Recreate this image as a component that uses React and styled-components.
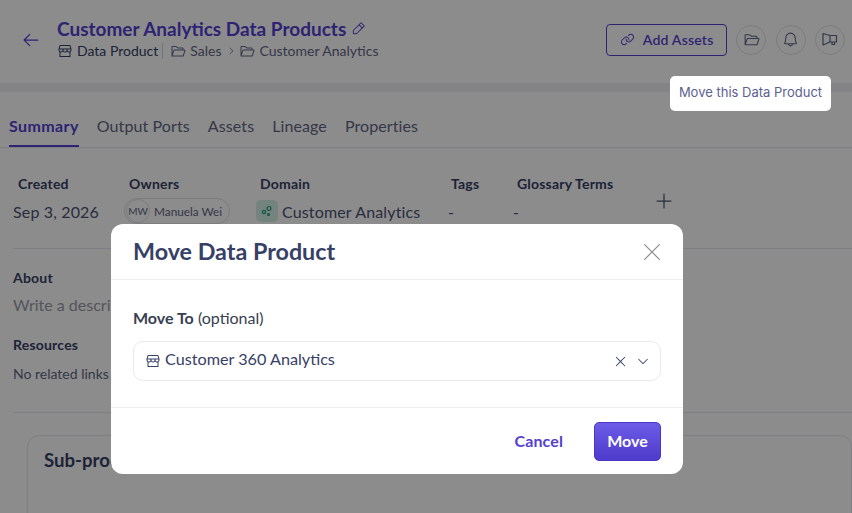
import React from "react";
import styled, { createGlobalStyle } from "styled-components";
import {
  PiArrowLeft,
  PiBell,
  PiCaretDown,
  PiCaretRight,
  PiFolderOpen,
  PiLink,
  PiPencilSimple,
  PiPlus,
  PiStorefront,
  PiX,
  PiXLight,
} from "react-icons/pi";

const GlobalStyle = createGlobalStyle`
  html, body {
    margin: 0;
    width: 852px;
    height: 513px;
    overflow: hidden;
    background: #fff;
    font-family: "Lato", "Noto Sans", sans-serif;
    color: #374066;
  }
  * { box-sizing: border-box; }
`;

const MoveIcon = () => (
  <svg width="18" height="18" viewBox="0 0 18 18" fill="none" stroke="currentColor" strokeWidth="1.2">
    <path d="M2 2.5l7 2h6.5V11H9l-7 3z" strokeLinejoin="round" />
    <path d="M9 4.5V11" />
    <path d="M11 11v2.5h2.5V11" />
  </svg>
);

const Page = styled.div`
  position: relative;
  width: 852px;
  height: 513px;
  overflow: hidden;
  background: #f1f1f6;
`;

const Header = styled.header`
  height: 83px;
  background: #fff;
  display: flex;
  align-items: center;
  padding: 0 7px 0 22px;
`;

const BackButton = styled.span`
  display: flex;
  color: #533fd1;
  font-size: 20px;
  margin: -3px 16px 0 -1px;
`;

const TitleBlock = styled.div`
  flex: 1;
  display: flex;
  flex-direction: column;
  gap: 2px;
  margin-top: -8px;
`;

const Title = styled.div`
  display: flex;
  align-items: center;
  gap: 5px;
  color: #533fd1;
  font-size: 19px;
  font-weight: 700;
  line-height: 24px;
  svg { font-size: 15px; }
`;

const Crumbs = styled.div`
  display: flex;
  align-items: center;
  font-size: 14px;
  line-height: 16px;
  color: #5f6685;
  svg { font-size: 16px; margin-right: 4px; }
`;

const TypeCrumb = styled.span`
  display: flex;
  align-items: center;
  color: #374066;
  padding-right: 4px;
  margin-right: 7px;
  border-right: 1px solid #d5d5dd;
`;

const CrumbSep = styled(PiCaretRight)`
  font-size: 10px !important;
  margin: 0 3px 0 5px !important;
`;

const HeaderActions = styled.div`
  display: flex;
  align-items: center;
  gap: 9.3px;
  margin-top: -4px;
`;

const AddButton = styled.button`
  width: 121px;
  height: 32px;
  display: flex;
  align-items: center;
  justify-content: center;
  gap: 8px;
  padding: 0;
  background: #fff;
  border: 1px solid #533fd1;
  border-radius: 4px;
  color: #533fd1;
  font: 600 14px "Lato", sans-serif;
  letter-spacing: 0.2px;
  svg { font-size: 15px; }
`;

const RoundButton = styled.span`
  width: 30px;
  height: 30px;
  display: flex;
  align-items: center;
  justify-content: center;
  border: 1px solid #e3e3e8;
  border-radius: 50%;
  color: #5f6685;
  font-size: 17px;
`;

const Body = styled.main`
  margin-top: 9px;
  height: 421px;
  background: #fff;
`;

const Tabs = styled.nav`
  height: 56px;
  display: flex;
  align-items: flex-start;
  gap: 18px;
  padding: 19px 0 0 9px;
  border-bottom: 1px solid #e8e8ee;
`;

const Tab = styled.span`
  height: 36px;
  padding-top: 5px;
  font-size: 16px;
  line-height: 20px;
  letter-spacing: ${(p) => (p.$active ? 0.4 : 0.1)}px;
  font-weight: ${(p) => (p.$active ? 700 : 400)};
  color: ${(p) => (p.$active ? "#533fd1" : "#5f6685")};
  border-bottom: 2px solid ${(p) => (p.$active ? "#533fd1" : "transparent")};
`;

const Stats = styled.section`
  height: 101px;
  margin-left: 13px;
  padding-top: 28px;
  display: flex;
  border-bottom: 1px solid #e8e8ee;
`;

const Stat = styled.div`
  width: ${(p) => p.$width}px;
`;

const StatLabel = styled.div`
  padding-left: ${(p) => p.$indent}px;
  height: 16px;
  font-size: 14px;
  line-height: 16px;
  font-weight: 700;
  letter-spacing: 0.2px;
  color: #374066;
`;

const StatValue = styled.div`
  display: flex;
  align-items: center;
  height: 28px;
  margin-top: 5px;
  font-size: 16px;
  letter-spacing: 0.15px;
  color: #4b5274;
`;

const OwnerPill = styled.span`
  display: flex;
  align-items: center;
  gap: 4px;
  width: 106px;
  height: 26px;
  padding-left: 1px;
  border: 1px solid #e3e3e8;
  border-radius: 13px;
  font-size: 11.8px;
  letter-spacing: 0;
  white-space: nowrap;
  color: #5f6685;
`;

const Initials = styled.span`
  width: 24px;
  height: 24px;
  flex: none;
  display: flex;
  align-items: center;
  justify-content: center;
  border: 1px solid #e3e3e8;
  border-radius: 50%;
  font-size: 10px;
`;

const DomainBadge = styled.span`
  width: 22px;
  height: 22px;
  display: flex;
  align-items: center;
  justify-content: center;
  margin-right: 4px;
  border-radius: 5px;
  background: #d6efe7;
  color: #1f9c78;
`;

const PlusButton = styled.span`
  display: flex;
  align-self: flex-start;
  margin: 15px 0 0 0;
  font-size: 20px;
  color: #4b5274;
`;

const Section = styled.section`
  margin-left: 13px;
  padding-top: 21px;
  height: 164px;
  border-bottom: 1px solid #e8e8ee;
`;

const SectionLabel = styled.div`
  margin-top: ${(p) => p.$top || 0}px;
  font-size: 14px;
  line-height: 16px;
  font-weight: 700;
  letter-spacing: 0.2px;
  color: #374066;
`;

const Placeholder = styled.div`
  margin-top: 9px;
  font-size: 16px;
  line-height: 20px;
  color: #9a9aa4;
`;

const Empty = styled.div`
  margin-top: 13px;
  font-size: 14px;
  line-height: 16px;
  color: #5f6685;
`;

const Card = styled.div`
  margin: 22px 0 0 27px;
  height: 120px;
  padding: 12px 16px;
  border: 1px solid #e8e8ee;
  border-radius: 12px;
  font-size: 18.6px;
  line-height: 24px;
  font-weight: 700;
  color: #374066;
`;

const Overlay = styled.div`
  position: absolute;
  inset: 0;
  padding: 224px 0 0 111px;
  background: rgba(0, 0, 0, 0.45);
`;

const Modal = styled.div`
  width: 572px;
  height: 250px;
  background: #fff;
  border-radius: 12px;
  display: flex;
  flex-direction: column;
`;

const ModalHeader = styled.div`
  height: 56px;
  display: flex;
  align-items: center;
  justify-content: space-between;
  padding: 0 18px 0 22px;
  border-bottom: 1px solid #ededf2;
`;

const ModalTitle = styled.h2`
  margin: 0 0 2px;
  font-size: 23.3px;
  font-weight: 700;
  color: #374066;
`;

const CloseIcon = styled(PiXLight)`
  font-size: 26px;
  color: #8c8c8c;
`;

const ModalBody = styled.div`
  height: 128px;
  padding: 29px 22px 0;
  border-bottom: 1px solid #ededf2;
`;

const FieldLabel = styled.div`
  font-size: 16px;
  line-height: 18px;
  color: #374151;
  b { font-weight: 700; }
`;

const SelectBox = styled.div`
  height: 40px;
  margin-top: 14px;
  display: flex;
  align-items: center;
  padding: 0 10px 0 11px;
  border: 1px solid #e9e9f0;
  border-radius: 10px;
  font-size: 16.2px;
  color: #374066;
  svg { flex: none; }
`;

const SelectText = styled.span`
  flex: 1;
  margin: -6px 0 0 4px;
`;

const Caret = styled(PiCaretDown)`
  margin-left: 8px;
`;

const ModalFooter = styled.div`
  flex: 1;
  display: flex;
  align-items: center;
  justify-content: flex-end;
  gap: 31px;
  padding: 0 22px 0 0;
`;

const CancelButton = styled.button`
  padding: 0 0 2px;
  border: 0;
  background: none;
  color: #533fd1;
  font: 700 16px "Lato", sans-serif;
  letter-spacing: 0.1px;
`;

const MoveButton = styled.button`
  width: 67px;
  height: 39px;
  padding: 0 0 2px;
  border: 1px solid #4a38c4;
  border-radius: 5px;
  background: linear-gradient(180deg, #6c5ce7 0%, #4e3acb 100%);
  color: #fff;
  font: 700 16px "Lato", sans-serif;
`;

const Tooltip = styled.div`
  position: absolute;
  left: 670px;
  top: 76px;
  width: 161px;
  height: 35px;
  display: flex;
  align-items: center;
  justify-content: center;
  padding-bottom: 3px;
  background: #fff;
  border-radius: 5px;
  font: 400 13px "Inter", sans-serif;
  color: #5b6190;
`;

const App = () => (
  <Page>
    <GlobalStyle />
    <Header>
      <BackButton>
        <PiArrowLeft />
      </BackButton>
      <TitleBlock>
        <Title>
          Customer Analytics Data Products <PiPencilSimple />
        </Title>
        <Crumbs>
          <TypeCrumb>
            <PiStorefront />
            Data Product
          </TypeCrumb>
          <PiFolderOpen />
          Sales
          <CrumbSep />
          <PiFolderOpen />
          Customer Analytics
        </Crumbs>
      </TitleBlock>
      <HeaderActions>
        <AddButton>
          <PiLink />
          Add Assets
        </AddButton>
        <RoundButton>
          <PiFolderOpen />
        </RoundButton>
        <RoundButton>
          <PiBell />
        </RoundButton>
        <RoundButton>
          <MoveIcon />
        </RoundButton>
      </HeaderActions>
    </Header>
    <Body>
      <Tabs>
        <Tab $active>Summary</Tab>
        <Tab>Output Ports</Tab>
        <Tab>Assets</Tab>
        <Tab>Lineage</Tab>
        <Tab>Properties</Tab>
      </Tabs>
      <Stats>
        <Stat $width={111}>
          <StatLabel $indent={5}>Created</StatLabel>
          <StatValue>Sep 3, 2026</StatValue>
        </Stat>
        <Stat $width={132}>
          <StatLabel $indent={5}>Owners</StatLabel>
          <StatValue>
            <OwnerPill>
              <Initials>MW</Initials>
              Manuela Wei
            </OwnerPill>
          </StatValue>
        </Stat>
        <Stat $width={192}>
          <StatLabel $indent={4}>Domain</StatLabel>
          <StatValue>
            <DomainBadge>
              <svg width="12" height="12" viewBox="0 0 12 12" fill="none" stroke="currentColor" strokeWidth="1.2">
                <circle cx="3" cy="7" r="1.6" />
                <circle cx="8" cy="3.5" r="2" />
                <circle cx="7.5" cy="9.5" r="1" />
              </svg>
            </DomainBadge>
            Customer Analytics
          </StatValue>
        </Stat>
        <Stat $width={65}>
          <StatLabel $indent={3}>Tags</StatLabel>
          <StatValue>-</StatValue>
        </Stat>
        <Stat $width={141}>
          <StatLabel $indent={4}>Glossary Terms</StatLabel>
          <StatValue>-</StatValue>
        </Stat>
        <PlusButton>
          <PiPlus />
        </PlusButton>
      </Stats>
      <Section>
        <SectionLabel>About</SectionLabel>
        <Placeholder>Write a description</Placeholder>
        <SectionLabel $top={22}>Resources</SectionLabel>
        <Empty>No related links</Empty>
      </Section>
      <Card>Sub-products</Card>
    </Body>
    <Overlay>
      <Modal>
        <ModalHeader>
          <ModalTitle>Move Data Product</ModalTitle>
          <CloseIcon />
        </ModalHeader>
        <ModalBody>
          <FieldLabel>
            <b>Move To</b> (optional)
          </FieldLabel>
          <SelectBox>
            <PiStorefront size={16} />
            <SelectText>Customer 360 Analytics</SelectText>
            <PiX size={15} />
            <Caret size={14} />
          </SelectBox>
        </ModalBody>
        <ModalFooter>
          <CancelButton>Cancel</CancelButton>
          <MoveButton>Move</MoveButton>
        </ModalFooter>
      </Modal>
    </Overlay>
    <Tooltip>Move this Data Product</Tooltip>
  </Page>
);

export default App;
